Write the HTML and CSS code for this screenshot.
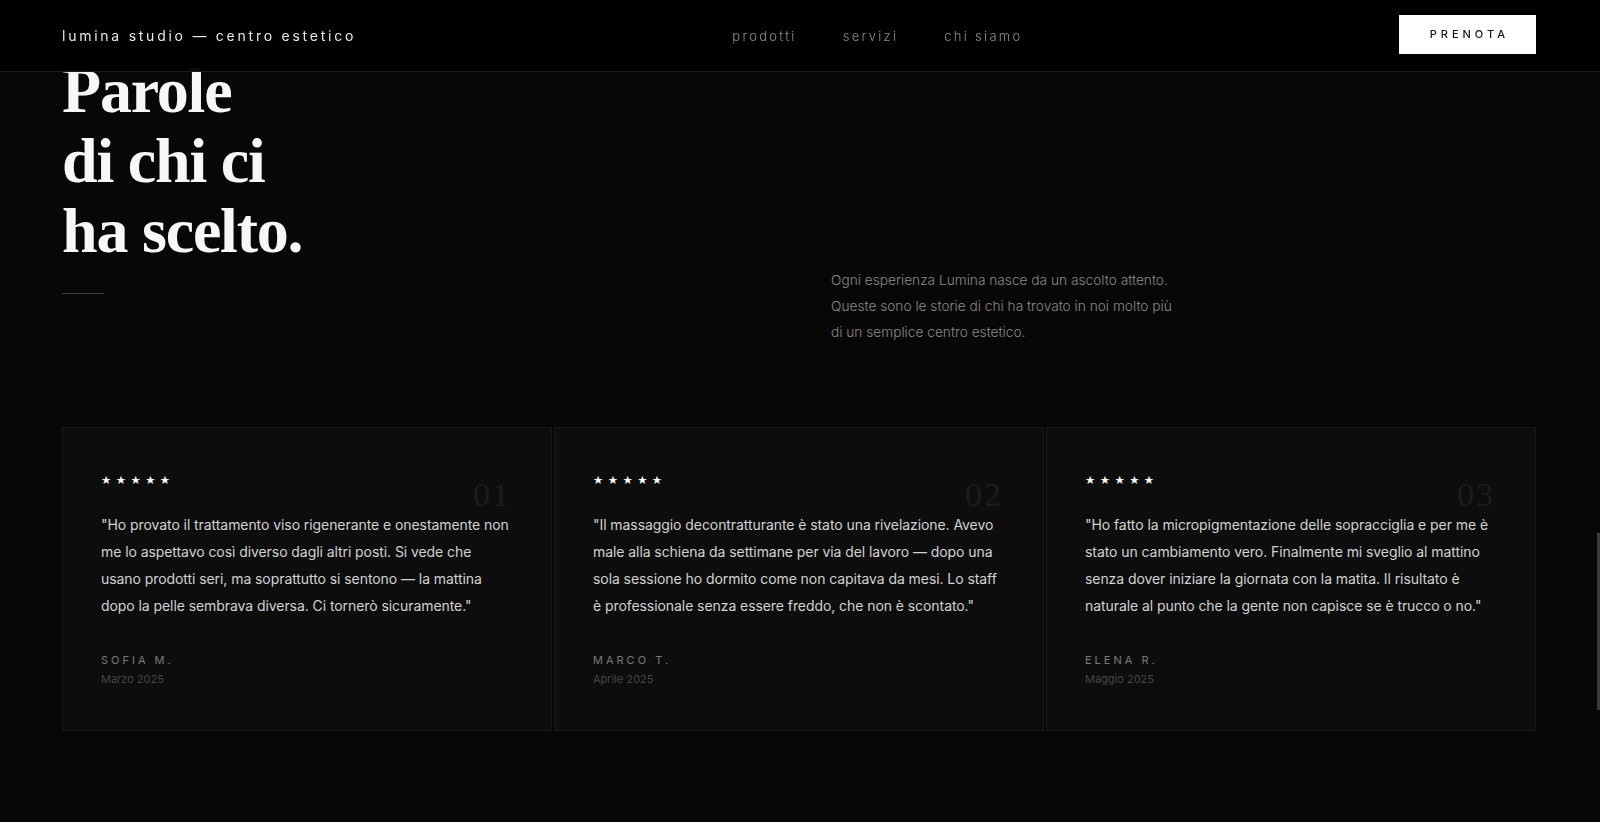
FILE: index.html
```html
<html>
    <head>
        <meta charset="utf-8">
        <link rel="stylesheet" href="styles.css">
    </head>
    <body>
        <header class="topbar">
            <a class="brand">lumina studio — centro estetico</a>
            <nav class="menu">
                <a>prodotti</a>
                <a>servizi</a>
                <a>chi siamo</a>
            </nav>
            <a class="cta">PRENOTA</a>
        </header>

        <main class="page">
            <section class="intro">
                <div class="intro-title">
                    <h1>Parole<br>di chi ci<br>ha scelto.</h1>
                    <span class="rule"></span>
                </div>
                <p class="intro-text">Ogni esperienza Lumina nasce da un ascolto attento.<br>Queste sono le storie di chi ha trovato in noi molto più<br>di un semplice centro estetico.</p>
            </section>

            <section class="reviews">
                <article class="review">
                    <span class="num">01</span>
                    <div class="stars">★★★★★</div>
                    <p class="quote">"Ho provato il trattamento viso rigenerante e onestamente non me lo aspettavo così diverso dagli altri posti. Si vede che usano prodotti seri, ma soprattutto si sentono — la mattina dopo la pelle sembrava diversa. Ci tornerò sicuramente."</p>
                    <div class="author">SOFIA M.</div>
                    <div class="date">Marzo 2025</div>
                </article>
                <article class="review">
                    <span class="num">02</span>
                    <div class="stars">★★★★★</div>
                    <p class="quote">"Il massaggio decontratturante è stato una rivelazione. Avevo male alla schiena da settimane per via del lavoro — dopo una sola sessione ho dormito come non capitava da mesi. Lo staff è professionale senza essere freddo, che non è scontato."</p>
                    <div class="author">MARCO T.</div>
                    <div class="date">Aprile 2025</div>
                </article>
                <article class="review">
                    <span class="num">03</span>
                    <div class="stars">★★★★★</div>
                    <p class="quote">"Ho fatto la micropigmentazione delle sopracciglia e per me è stato un cambiamento vero. Finalmente mi sveglio al mattino senza dover iniziare la giornata con la matita. Il risultato è naturale al punto che la gente non capisce se è trucco o no."</p>
                    <div class="author">ELENA R.</div>
                    <div class="date">Maggio 2025</div>
                </article>
            </section>
        </main>

        <div class="scroll-thumb"></div>
    </body>
</html>
```

FILE: styles.css
```css
body {
    margin: 0;
    background: #070707;
    color: #f2f2f2;
    font-family: Inter, "Noto Sans", sans-serif;
    overflow: hidden;
}

.topbar {
    position: fixed;
    top: 0;
    left: 0;
    right: 0;
    z-index: 10;
    height: 71px;
    display: flex;
    align-items: center;
    justify-content: space-between;
    padding: 0 64px 0 62px;
    background: rgba(0, 0, 0, 0.96);
    border-bottom: 1px solid #1b1b1b;
}
.brand {
    font-size: 14px;
    letter-spacing: 2.75px;
    color: #e8e8e8;
}
.menu {
    display: flex;
    gap: 46px;
    padding-top: 1px;
}
.menu a {
    font-size: 13px;
    font-weight: 300;
    letter-spacing: 2.3px;
    color: #8c8c8c;
}
.cta {
    background: #fff;
    color: #151515;
    font-size: 11px;
    font-weight: 500;
    letter-spacing: 4px;
    line-height: 15px;
    padding: 12px 27px 12px 31px;
    margin-bottom: 2px;
}

.page {
    padding: 56px 64px 0 62px;
}

.intro {
    display: grid;
    grid-template-columns: 1fr 1fr;
    gap: 64px;
    align-items: end;
}
.intro-title h1 {
    margin: 0;
    font-family: "Liberation Serif", serif;
    font-size: 64px;
    line-height: 70px;
    letter-spacing: -1.2px;
    font-weight: bold;
    color: #f7f7f7;
}
.intro-title .rule {
    display: block;
    width: 42px;
    height: 1px;
    background: #3a3a3a;
    margin: 27px 0 51px;
}
.intro-text {
    margin: 0;
    font-size: 13.7px;
    line-height: 26px;
    font-weight: 300;
    color: #8a8a8a;
}

.reviews {
    display: grid;
    grid-template-columns: repeat(3, 1fr);
    gap: 2px;
    margin-top: 82px;
}
.review {
    position: relative;
    background: #0d0d0d;
    border: 1px solid #181818;
    padding: 45px 38px 43px;
}
.review .num {
    position: absolute;
    top: 50px;
    right: 40px;
    font-family: "Liberation Serif", serif;
    font-size: 34px;
    line-height: 34px;
    letter-spacing: 2px;
    color: #1c1c1c;
}
.stars {
    font-family: "DejaVu Sans", sans-serif;
    font-size: 11.5px;
    line-height: 14px;
    letter-spacing: 4.4px;
    color: #fff;
    margin-bottom: 24px;
}
.quote {
    margin: 0 0 33px;
    font-size: 14px;
    line-height: 27px;
    letter-spacing: -0.07px;
    color: #d2d2d2;
}
.author {
    font-size: 11px;
    line-height: 16px;
    letter-spacing: 3px;
    color: #7a7a7a;
}
.date {
    margin-top: 3px;
    font-size: 11px;
    line-height: 16px;
    color: #454545;
}

.scroll-thumb {
    position: fixed;
    top: 533px;
    right: 0;
    width: 3px;
    height: 177px;
    background: #3c3c3c;
}
```
